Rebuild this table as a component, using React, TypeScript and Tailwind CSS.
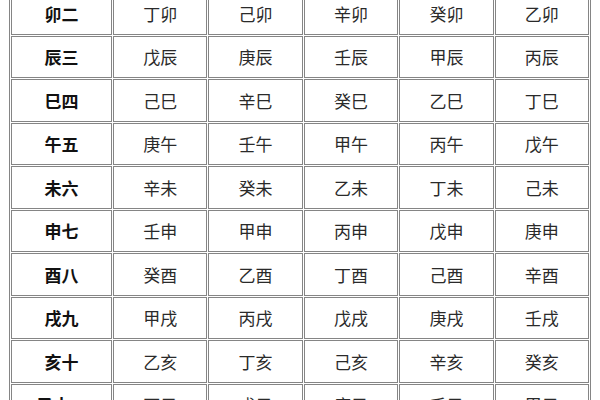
import React from "react";

const rows: [string, string[]][] = [
  ["卯二", ["丁卯", "己卯", "辛卯", "癸卯", "乙卯"]],
  ["辰三", ["戊辰", "庚辰", "壬辰", "甲辰", "丙辰"]],
  ["巳四", ["己巳", "辛巳", "癸巳", "乙巳", "丁巳"]],
  ["午五", ["庚午", "壬午", "甲午", "丙午", "戊午"]],
  ["未六", ["辛未", "癸未", "乙未", "丁未", "己未"]],
  ["申七", ["壬申", "甲申", "丙申", "戊申", "庚申"]],
  ["酉八", ["癸酉", "乙酉", "丁酉", "己酉", "辛酉"]],
  ["戌九", ["甲戌", "丙戌", "戊戌", "庚戌", "壬戌"]],
  ["亥十", ["乙亥", "丁亥", "己亥", "辛亥", "癸亥"]],
  ["子十一", ["丙子", "戊子", "庚子", "壬子", "甲子"]],
];

export default function App() {
  return (
    <div
      className="w-[600px] h-[400px] overflow-hidden bg-white"
      style={{ fontFamily: '"Noto Sans CJK SC", "Noto Sans", sans-serif' }}
    >
      <div className="ml-[9px] -mt-[10px] w-[582px] border border-[#858585] p-[1px]">
        <div className="grid grid-cols-[101px_repeat(5,1fr)] gap-[1px]">
          {rows.map(([head, cells]) => (
            <React.Fragment key={head}>
              <div className="h-[42.5px] border border-[#858585] flex items-center justify-center text-[17px] font-bold text-[#111]">
                {head}
              </div>
              {cells.map((c, i) => (
                <div
                  key={i}
                  className="h-[42.5px] border border-[#858585] flex items-center justify-center text-[17px] text-[#2a2a2a]"
                >
                  {c}
                </div>
              ))}
            </React.Fragment>
          ))}
        </div>
      </div>
    </div>
  );
}
